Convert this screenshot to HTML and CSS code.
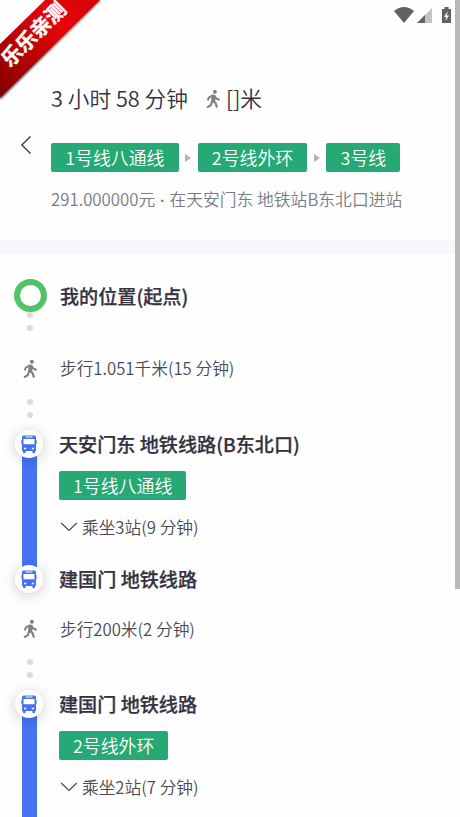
FILE: index.html
```html
<!DOCTYPE html>
<html lang="zh-CN">
<head>
<meta charset="utf-8">
<title>路线详情</title>
<link rel="stylesheet" href="styles.css">
</head>
<body>
<svg class="defs" width="0" height="0">
  <symbol id="walk" viewBox="0 0 14 20">
    <circle cx="8.9" cy="2.8" r="2"/>
    <path d="M7.4 12.2 9.6 14.2 11 18.6M6.2 12 4.8 16.2 1 18.4M6.5 6.6 3 8.4 1.6 11.4M8.2 7 10.2 9.4 13.6 11" fill="none" stroke="currentColor" stroke-width="2.1"/>
    <path d="M5.5 5.8Q8 4.8 9.6 6.4L9.2 13.4 5 13.4Z"/>
  </symbol>
  <symbol id="bus" viewBox="0 0 16 19">
    <path fill-rule="evenodd" d="M2.5 .5H13.5Q15 .5 15 2V16H14V17.8Q12.7 18.6 11.4 17.8V16H4.6V17.8Q3.3 18.6 2 17.8V16H1V2Q1 .5 2.5 .5ZM4.5 1.5V2.6H11.5V1.5ZM2.5 4V9.2H13.5V4ZM3 12.8V14.2H5.2V12.8ZM10.8 12.8V14.2H13V12.8Z"/>
    <path d="M.4 5H1V9H.4ZM15 5H15.6V9H15Z"/>
  </symbol>
  <symbol id="down" viewBox="0 0 18 10">
    <path d="M1.2 1 9 8.5 16.8 1" fill="none" stroke="currentColor" stroke-width="1.2"/>
  </symbol>
</svg>

<svg class="ribbon" viewBox="0 0 104 104">
  <defs>
    <linearGradient id="red" gradientUnits="userSpaceOnUse" x1="0" y1="90" x2="92" y2="0">
      <stop offset="0" stop-color="#860000"/>
      <stop offset=".35" stop-color="#b80205"/>
      <stop offset=".7" stop-color="#e6060b"/>
      <stop offset="1" stop-color="#d20508"/>
    </linearGradient>
    <filter id="soft"><feGaussianBlur stdDeviation="1"/></filter>
  </defs>
  <path d="M0 100 L101 0 H98 L0 96Z" fill="#555" filter="url(#soft)"/>
  <path d="M0 44 L45 0 H100 L0 98Z" fill="url(#red)"/>
  <text class="ribbon-text" transform="translate(33.5 34) rotate(-45)" text-anchor="middle" y="7.5">乐乐亲测</text>
</svg>

<svg class="status" viewBox="0 0 60 20">
  <path d="M0 4Q10 -4 20 4L10 16Z" fill="#616161"/>
  <path d="M23 16 38 1V16Z" fill="#c4c4c4"/>
  <path d="M23 16 31 8V16Z" fill="#616161"/>
  <path d="M48 2H50.5V0H54.5V2H57V16H48Z" fill="#616161"/>
  <path d="M53.8 4 50 10H52.3L51.6 14 55 8.5H52.8Z" fill="#fff"/>
</svg>
<div class="scrollbar"></div>

<header class="summary">
  <svg class="back" viewBox="0 0 12 20"><path d="M10.5 1.5 1.8 10 10.5 18.5"/></svg>
  <div class="details">
    <div class="total"><span>3 小时 58 分钟</span><svg class="walk"><use href="#walk"/></svg><span>[]米</span></div>
    <div class="lines">
      <span class="tag">1号线八通线</span><i class="arrow"></i><span class="tag">2号线外环</span><i class="arrow"></i><span class="tag">3号线</span>
    </div>
    <div class="fare">291.000000元 <span class="dot">·</span> 在天安门东 地铁站B东北口进站</div>
  </div>
</header>

<main>
  <section class="row start">
    <div class="rail"><span class="origin"></span><span class="dots"><i></i><i></i></span></div>
    <h2>我的位置(起点)</h2>
  </section>
  <section class="row walking">
    <div class="rail"><svg class="walk"><use href="#walk"/></svg></div>
    <p>步行1.051千米(15 分钟)</p>
  </section>
  <div class="rail gap"><span class="dots"><i></i><i></i></span></div>
  <section class="row leg">
    <div class="rail">
      <span class="stop"><svg><use href="#bus"/></svg></span>
      <span class="track"></span>
      <span class="stop"><svg><use href="#bus"/></svg></span>
    </div>
    <div class="steps">
      <h2>天安门东 地铁线路(B东北口)</h2>
      <span class="tag">1号线八通线</span>
      <p class="ride"><svg><use href="#down"/></svg>乘坐3站(9 分钟)</p>
      <h2>建国门 地铁线路</h2>
    </div>
  </section>
  <section class="row walking transfer">
    <div class="rail"><svg class="walk"><use href="#walk"/></svg></div>
    <p>步行200米(2 分钟)</p>
  </section>
  <div class="rail gap second"><span class="dots"><i></i><i></i></span></div>
  <section class="row leg">
    <div class="rail">
      <span class="stop"><svg><use href="#bus"/></svg></span>
      <span class="track"></span>
    </div>
    <div class="steps">
      <h2>建国门 地铁线路</h2>
      <span class="tag">2号线外环</span>
      <p class="ride"><svg><use href="#down"/></svg>乘坐2站(7 分钟)</p>
    </div>
  </section>
</main>
</body>
</html>
```
FILE: styles.css
```css
* { box-sizing: border-box; }
body {
  margin: 0;
  height: 817px;
  overflow: hidden;
  position: relative;
  background: #fefefe;
  color: #33323e;
  font-family: "Noto Sans CJK SC", sans-serif;
}
svg { display: block; fill: currentColor; }
h2, p { margin: 0; white-space: nowrap; }
.defs { position: absolute; }
.ribbon { position: absolute; left: 0; top: 0; width: 104px; height: 104px; }
.ribbon-text { fill: #fff; font-size: 20.3px; font-weight: 700; stroke: #fff; stroke-width: .4px; }
.status { position: absolute; left: 394px; top: 7px; width: 60px; height: 20px; }
.scrollbar { position: absolute; right: 0; top: 0; width: 5px; height: 589px; background: #b8b8b8; }

.summary {
  display: flex;
  height: 254px;
  padding: 83px 0 0 20px;
  border-bottom: 14px solid #f6f6fb;
}
.back { width: 12px; height: 20px; margin: 52px 19px 0 0; fill: none; stroke: #3e3e46; stroke-width: 1.4; }
.details { white-space: nowrap; }
.total { display: flex; align-items: center; height: 30px; font-size: 21.7px; font-weight: 350; line-height: 30px; }
.walk { width: 14px; height: 20px; color: #808087; }
.total .walk { margin: 2px 6px 0 18px; }
.lines { display: flex; align-items: center; margin-top: 30px; }
.tag {
  display: block;
  width: max-content;
  height: 29px;
  padding: 0 14px;
  border-radius: 2px;
  background: #26a974;
  color: #fff;
  font-size: 17.9px;
  font-weight: 350;
  line-height: 29px;
}
.arrow { margin: 0 6.5px 0 6.5px; border-left: 6.5px solid #b2b2bc; border-top: 4.5px solid transparent; border-bottom: 4.5px solid transparent; }
.lines .tag { padding: 0 14.2px; }
.fare { margin-top: 15px; color: #7b7b82; font-size: 16.8px; font-weight: 350; line-height: 24px; }
.dot { margin: 0 .8px; font-family: Roboto, sans-serif; font-weight: 700; }

.row { display: grid; grid-template-columns: 59px 1fr; }
.rail { display: flex; flex-direction: column; align-items: center; width: 60px; }
h2 { font-size: 19.12px; font-weight: 500; line-height: 44px; height: 44px; -webkit-text-stroke: .25px; }
p { color: #4b4a54; font-size: 16.7px; font-weight: 350; line-height: 28px; }
.start { height: 84px; }
.start .rail { padding-top: 25px; }
.start h2 { padding: 20px 0 0 1px; }
.origin { width: 33px; height: 33px; border: 6px solid #53c269; border-radius: 50%; }
.dots { display: flex; flex-direction: column; gap: 7px; }
.dots i { width: 6px; height: 6px; border-radius: 50%; background: #dcdcdc; }
.walking { height: 61px; align-items: center; }
.walking p { padding-left: 1px; line-height: 26px; padding-bottom: 1px; }
.gap { height: 23px; }
.transfer { height: 56px; }
.second { height: 25px; padding-top: 2px; }
.leg .rail { width: 58px; }
.stop {
  position: relative;
  z-index: 1;
  display: grid;
  place-items: center;
  flex: none;
  width: 28px;
  height: 28px;
  margin: 8px 0;
  border-radius: 50%;
  background: #fff;
  color: #4672ef;
  box-shadow: 0 2px 13px rgba(0, 0, 0, .2);
}
.stop svg { width: 16px; height: 19px; }
.track { flex: 1; width: 15px; margin: -10px 0; background: #4774f5; }
.steps .tag { margin-top: 5px; }
.ride { display: flex; align-items: center; height: 28px; margin: 13px 0 16px; }
.ride svg { width: 18px; height: 10px; margin: 0 4px 0 1px; }
```
